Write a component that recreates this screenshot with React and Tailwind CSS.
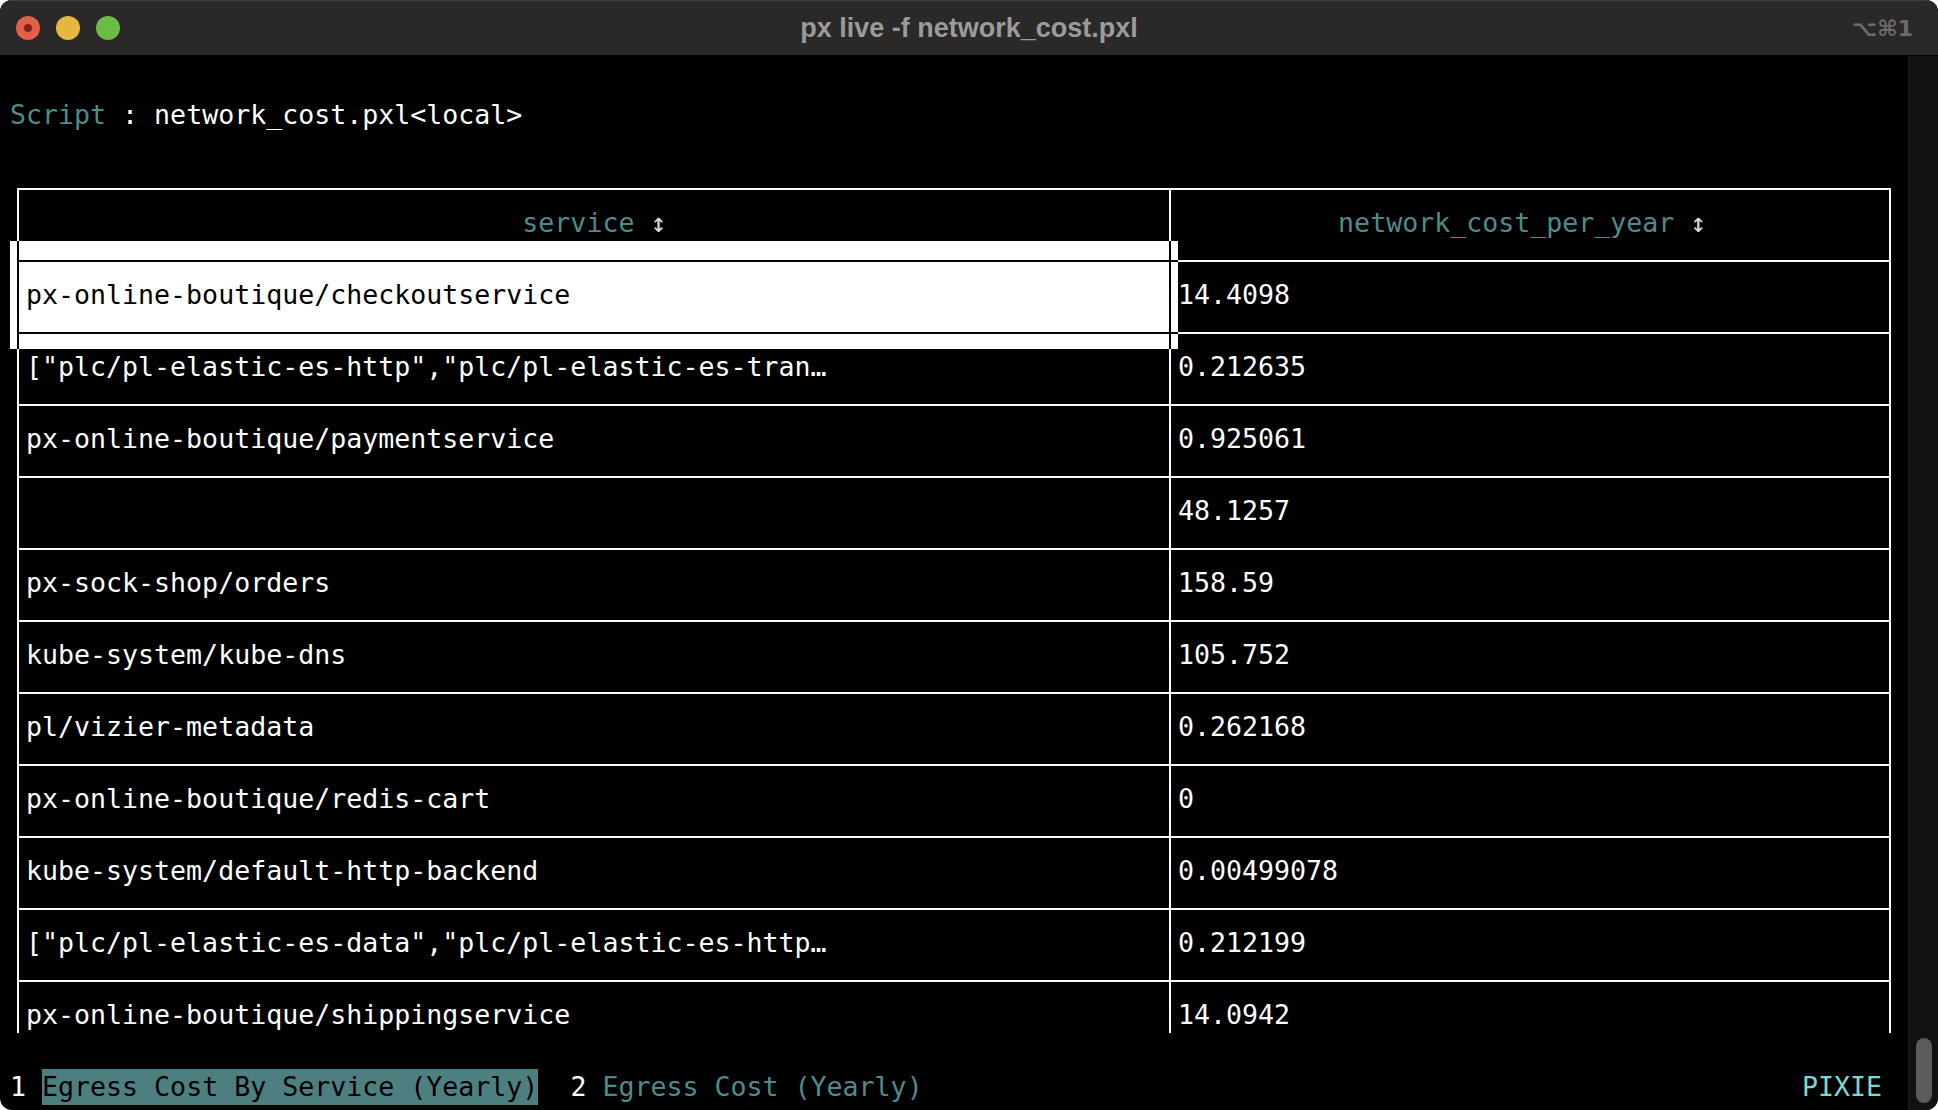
import React from 'react';

const rows = [
  ['px-online-boutique/checkoutservice', '14.4098'],
  ['["plc/pl-elastic-es-http","plc/pl-elastic-es-tran…', '0.212635'],
  ['px-online-boutique/paymentservice', '0.925061'],
  ['', '48.1257'],
  ['px-sock-shop/orders', '158.59'],
  ['kube-system/kube-dns', '105.752'],
  ['pl/vizier-metadata', '0.262168'],
  ['px-online-boutique/redis-cart', '0'],
  ['kube-system/default-http-backend', '0.00499078'],
  ['["plc/pl-elastic-es-data","plc/pl-elastic-es-http…', '0.212199'],
  ['px-online-boutique/shippingservice', '14.0942'],
];

// one box-drawing cell, drawn with thin css lines
const Joint = ({ up, down, left, right, dark, bg }) => {
  const c = dark ? 'bg-black' : 'bg-white';
  return (
    <div className={`flex h-full w-[16px] flex-col ${bg ? 'bg-white' : ''}`}>
      <div className="flex h-[19px] justify-center">
        {up && <div className={`w-[2px] ${c}`} />}
      </div>
      <div className="flex h-[2px]">
        <div className={`flex-1 ${left ? c : ''}`} />
        <div className={`w-[2px] ${up || down || left || right ? c : ''}`} />
        <div className={`flex-1 ${right ? c : ''}`} />
      </div>
      <div className="flex flex-1 justify-center">
        {down && <div className={`w-[2px] ${c}`} />}
      </div>
    </div>
  );
};

const Line = ({ children }) => (
  <div className="flex h-[36px] items-center pl-[10px] whitespace-pre">{children}</div>
);

const Rule = ({ dark, w }) => (
  <div className={`flex h-full flex-col pt-[19px] ${w} ${dark ? 'bg-white' : ''}`}>
    <div className={`h-[2px] w-full ${dark ? 'bg-black' : 'bg-white'}`} />
  </div>
);

const BorderLine = ({ top, sel }) => (
  <Line>
    <Joint up={!top} down right dark={sel} bg={sel} />
    <Rule dark={sel} w="w-[1136px]" />
    <Joint up={!top} down left right dark={sel} bg={sel} />
    <Rule w="w-[704px]" />
    <Joint up={!top} down left />
  </Line>
);

const RowLine = ({ a, b, sel, header }) => (
  <Line>
    <Joint up down dark={sel} bg={sel} />
    <div
      className={`flex h-full w-[1136px] items-center overflow-hidden ${
        sel ? 'bg-white text-black' : header ? 'text-[#4f8b8d]' : 'text-white'
      }`}
    >
      {a}
    </div>
    <Joint up down dark={sel} bg={sel} />
    <div
      className={`flex h-full w-[704px] items-center overflow-hidden ${
        header ? 'text-[#4f8b8d]' : 'text-white'
      }`}
    >
      {b}
    </div>
    <Joint up down />
  </Line>
);

const Arrow = () => <span className="text-[#dcdcdc]">↕</span>;

export default function App() {
  return (
    <div className="h-[1110px] w-[1938px] bg-white">
      <div className="flex h-full flex-col overflow-hidden rounded-[12px] bg-black">
        {/* Title bar */}
        <div className="grid h-[56px] shrink-0 grid-cols-[1fr_auto_1fr] items-center border-t border-b border-t-[#3e3d3c] border-b-black bg-[#2a2928]">
          <div className="flex items-center gap-[16px] pl-[16px]">
            <div className="flex h-[24px] w-[24px] items-center justify-center rounded-full bg-[#e0604a]">
              <div className="h-[8px] w-[8px] rounded-full bg-[#8a1c10]" />
            </div>
            <div className="h-[24px] w-[24px] rounded-full bg-[#e4b83f]" />
            <div className="h-[24px] w-[24px] rounded-full bg-[#6bbd46]" />
          </div>
          <div className="font-['Liberation_Sans',sans-serif] text-[27px] font-bold text-[#9b9b9b]">
            px live -f network_cost.pxl
          </div>
          <div className="pr-[25px] text-right font-['DejaVu_Sans',sans-serif] text-[22px] font-bold text-[#6b6b6b]">
            ⌥⌘1
          </div>
        </div>

        {/* Body */}
        <div className="flex flex-1">
          <div className="w-[1908px] pt-[5px] font-['DejaVu_Sans_Mono',monospace] text-[26.6px] leading-[36px]">
            <Line />
            <Line>
              <span className="text-[#4f8b8d]">Script</span>
              <span className="text-white"> : network_cost.pxl&lt;local&gt;</span>
            </Line>
            <Line />
            <BorderLine top />
            <RowLine
              header
              a={
                <>
                  {'                               service '}
                  <Arrow />
                </>
              }
              b={
                <>
                  {'          network_cost_per_year '}
                  <Arrow />
                </>
              }
            />
            {rows.map((r, i) => (
              <React.Fragment key={i}>
                <BorderLine sel={i <= 1} />
                <RowLine a={r[0]} b={r[1]} sel={i === 0} />
              </React.Fragment>
            ))}
            <Line />
            <Line>
              <div className="flex h-full w-[1872px] items-center">
                <span className="text-white">1 </span>
                <span className="flex h-full items-center bg-[#4e7f80] text-black">
                  Egress Cost By Service (Yearly)
                </span>
                <span className="text-white">  2 </span>
                <span className="text-[#4f8b8d]">Egress Cost (Yearly)</span>
                <span className="ml-auto text-[#80d4d8]">PIXIE</span>
              </div>
            </Line>
          </div>

          {/* Scrollbar */}
          <div className="flex flex-1 flex-col items-center justify-end border-l border-[#1b1b1b] bg-[#111111] pb-[7px]">
            <div className="h-[65px] w-[16px] rounded-full bg-[#5b5b5b]" />
          </div>
        </div>
      </div>
    </div>
  );
}
